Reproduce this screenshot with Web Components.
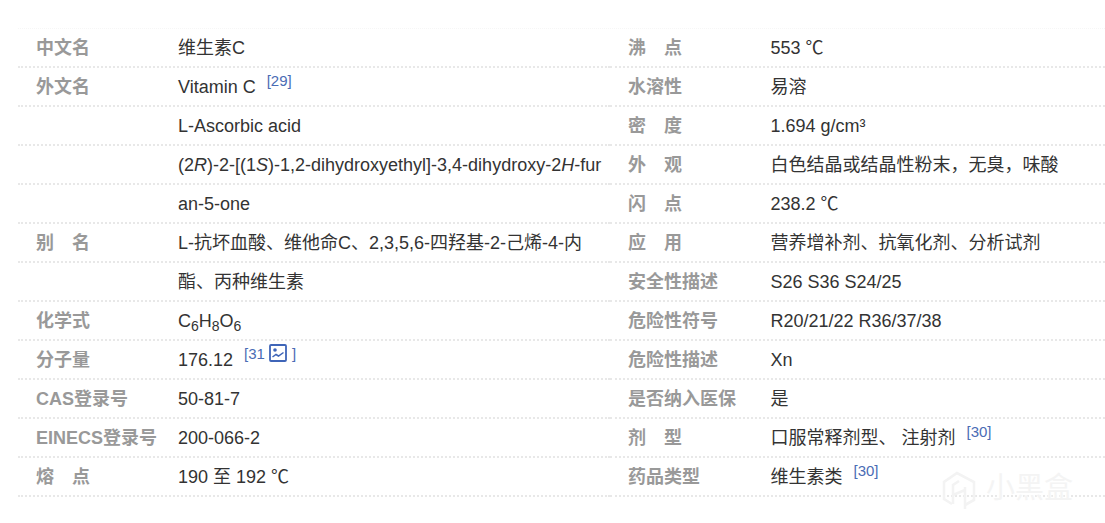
<!DOCTYPE html>
<html lang="zh">
<head>
<meta charset="utf-8">
<title>维生素C</title>
<style>
  html, body { margin: 0; background: #fff; }
  body { font-family: "Liberation Sans", "Noto Sans CJK SC", sans-serif; }
</style>
</head>
<body>
<template id="info-table-template">
  <style>
    :host {
      display: block;
      box-sizing: border-box;
      width: 1105px;
      height: 523px;
      padding: 28px 0 0 18px;
      font-size: 18px;
      color: #333;
    }
    .grid {
      display: grid;
      grid-template-columns: 592px 495px;
      grid-auto-flow: column;
      grid-template-rows: repeat(12, 39px);
      border-top: 1px dotted #f6f6f6;
      width: 1087px;
    }
  </style>
  <div class="grid"><slot></slot></div>
</template>

<template id="info-row-template">
  <style>
    :host {
      display: flex;
      box-sizing: border-box;
      height: 39px;
      border-bottom: 2px dotted #e8e8e8;
      line-height: 39px;
      white-space: nowrap;
      overflow: visible;
    }
    .name {
      flex: none;
      width: 142px;
      padding-left: 18px;
      font-weight: 700;
      color: #999;
    }
    :host([side="right"]) .name { width: 142.5px; }
    .value { flex: 1; min-width: 0; }
  </style>
  <div class="name"></div>
  <div class="value"><slot></slot></div>
</template>

<template id="ref-mark-template">
  <style>
    :host {
      display: inline-block;
      margin-left: 11px;
      font-size: 15px;
      line-height: 15px;
      color: #4a6cb5;
      vertical-align: 7px;
    }
  </style>
  <slot></slot>
</template>

<template id="chart-icon-template">
  <style>
    :host { display: inline-block; width: 18px; height: 18px; vertical-align: -3px; margin: 0 5px 0 0; }
    svg { display: block; }
  </style>
  <svg width="18" height="18" viewBox="0 0 18 18" fill="none" stroke="#3f65b8">
    <rect x="1" y="1" width="16" height="16" rx="1" stroke-width="1.800"/>
    <circle cx="6" cy="6" r="1.800" fill="#3f65b8" stroke="none"/>
    <path d="M3.500 13l3.500-2.500 2.500 1.500 5-3.500" stroke-width="1.500"/>
  </svg>
</template>

<template id="brand-mark-template">
  <style>
    :host {
      position: absolute;
      left: 942px;
      top: 470px;
      display: flex;
      align-items: flex-start;
      gap: 10px;
      color: #f4f4f4;
      font-size: 29px;
      line-height: 36px;
      pointer-events: none;
      text-shadow: 0 0 2px #fff, 0 0 2px #fff;
    }
    svg { display: block; }
  </style>
  <svg width="34" height="41" viewBox="0 0 34 41" fill="none" stroke="#f3f3f3" stroke-width="2.600">
    <path d="M10 34L2 29V12L15 3l17 9v18l-9 5"/>
    <path d="M11 34V15l6-4M23 39V17M11 25l12-5"/>
  </svg>
  <span><slot></slot></span>
</template>

<info-table>
  <info-row name="中文名">维生素C</info-row>
  <info-row name="外文名">Vitamin C<ref-mark>[29]</ref-mark></info-row>
  <info-row>L-Ascorbic acid</info-row>
  <info-row>(2<i>R</i>)-2-[(1<i>S</i>)-1,2-dihydroxyethyl]-3,4-dihydroxy-2<i>H</i>-fur</info-row>
  <info-row>an-5-one</info-row>
  <info-row name="别　名">L-抗坏血酸、维他命C、2,3,5,6-四羟基-2-己烯-4-内</info-row>
  <info-row>酯、丙种维生素</info-row>
  <info-row name="化学式">C<sub-num>6</sub-num>H<sub-num>8</sub-num>O<sub-num>6</sub-num></info-row>
  <info-row name="分子量">176.12<ref-mark>[31 <chart-icon></chart-icon>]</ref-mark></info-row>
  <info-row name="CAS登录号">50-81-7</info-row>
  <info-row name="EINECS登录号">200-066-2</info-row>
  <info-row name="熔　点">190 至 192 ℃</info-row>

  <info-row side="right" name="沸　点">553 ℃</info-row>
  <info-row side="right" name="水溶性">易溶</info-row>
  <info-row side="right" name="密　度">1.694 g/cm³</info-row>
  <info-row side="right" name="外　观">白色结晶或结晶性粉末，无臭，味酸</info-row>
  <info-row side="right" name="闪　点">238.2 ℃</info-row>
  <info-row side="right" name="应　用">营养增补剂、抗氧化剂、分析试剂</info-row>
  <info-row side="right" name="安全性描述">S26 S36 S24/25</info-row>
  <info-row side="right" name="危险性符号">R20/21/22 R36/37/38</info-row>
  <info-row side="right" name="危险性描述">Xn</info-row>
  <info-row side="right" name="是否纳入医保">是</info-row>
  <info-row side="right" name="剂　型">口服常释剂型、 注射剂<ref-mark>[30]</ref-mark></info-row>
  <info-row side="right" name="药品类型">维生素类<ref-mark>[30]</ref-mark></info-row>
</info-table>
<brand-mark>小黑盒</brand-mark>

<script>
  function fromTemplate(el, id) {
    const root = el.attachShadow({ mode: 'open' });
    root.appendChild(document.getElementById(id).content.cloneNode(true));
    return root;
  }

  class InfoTable extends HTMLElement {
    constructor() {
      super();
      fromTemplate(this, 'info-table-template');
    }
  }

  class InfoRow extends HTMLElement {
    constructor() {
      super();
      this._root = fromTemplate(this, 'info-row-template');
    }
    connectedCallback() {
      this._root.querySelector('.name').textContent = this.getAttribute('name') || '';
    }
  }

  class RefMark extends HTMLElement {
    constructor() {
      super();
      fromTemplate(this, 'ref-mark-template');
    }
  }

  class SubNum extends HTMLElement {
    constructor() {
      super();
      const root = this.attachShadow({ mode: 'open' });
      root.innerHTML = `<style>:host { font-size: 14px; vertical-align: -4px; line-height: 0; }</style><slot></slot>`;
    }
  }

  class ChartIcon extends HTMLElement {
    constructor() {
      super();
      fromTemplate(this, 'chart-icon-template');
    }
  }

  class BrandMark extends HTMLElement {
    constructor() {
      super();
      fromTemplate(this, 'brand-mark-template');
    }
  }

  customElements.define('info-table', InfoTable);
  customElements.define('info-row', InfoRow);
  customElements.define('ref-mark', RefMark);
  customElements.define('sub-num', SubNum);
  customElements.define('chart-icon', ChartIcon);
  customElements.define('brand-mark', BrandMark);
</script>
</body>
</html>
